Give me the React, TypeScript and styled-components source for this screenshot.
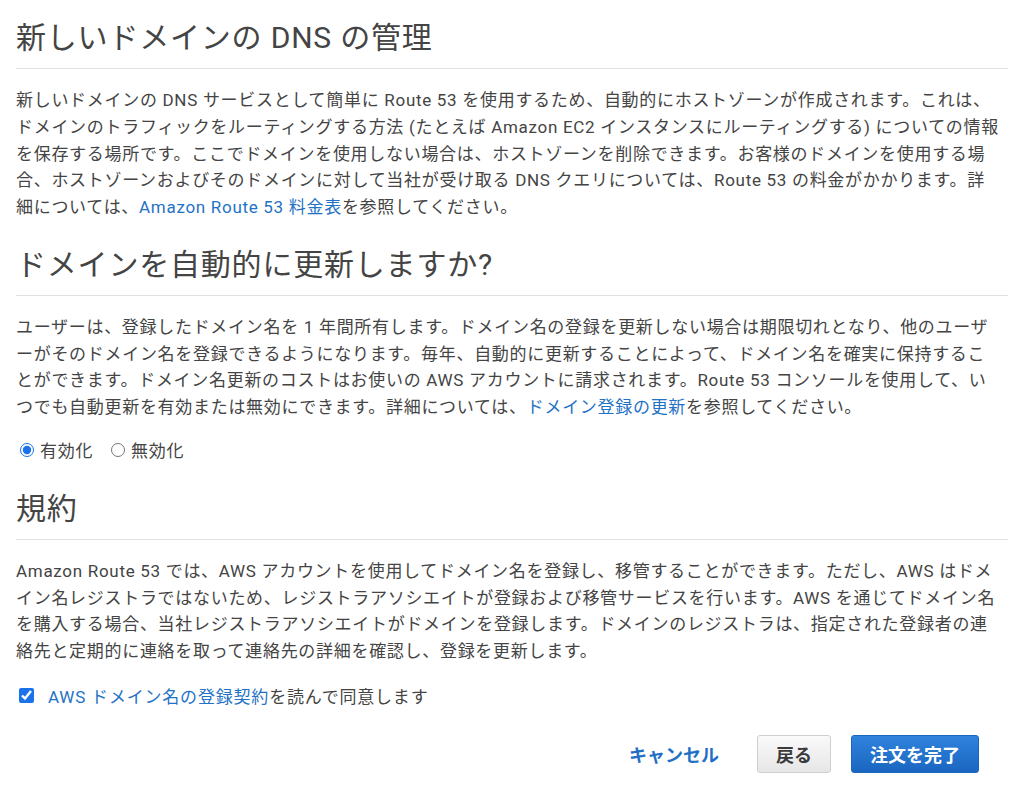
import React from "react";
import styled, { createGlobalStyle } from "styled-components";

const Global = createGlobalStyle`
  html, body { margin: 0; padding: 0; background: #fff; }
  body {
    font-family: Roboto, "Noto Sans CJK JP", "Noto Sans", sans-serif;
    color: #444;
  }
`;

const Page = styled.div`
  padding: 18px 16px 0 16px;
  display: flex;
  flex-direction: column;
`;

const Section = styled.section<{ $gap?: number }>`
  display: flex;
  flex-direction: column;
  margin-top: ${(p) => p.$gap ?? 0}px;
`;

const Heading = styled.h2`
  margin: 0;
  font-size: 30px;
  font-weight: 400;
  letter-spacing: 0.8px;
  line-height: 40px;
  color: #444;
  padding-bottom: 10px;
  border-bottom: 1px solid #e1e1e1;
`;

const Para = styled.p`
  margin: 18px 0 0 0;
  font-size: 17px;
  letter-spacing: 0.7px;
  line-height: 26.75px;
  color: #444;
`;

const Link = styled.a`
  color: #1f72c6;
  text-decoration: none;
`;

const OptionRow = styled.div`
  display: flex;
  align-items: center;
  gap: 14px;
  height: 16px;
  margin-top: 21px;
  font-size: 17px;
  letter-spacing: 0.7px;
`;

const Option = styled.label`
  display: flex;
  align-items: center;
  gap: 6px;
  cursor: pointer;
`;

const Radio = styled.input.attrs({ type: "radio" })`
  margin: 0 0 0 4px;
  width: 14px;
  height: 14px;
  accent-color: #1a73e8;
`;

const Check = styled.input.attrs({ type: "checkbox" })`
  margin: 0 0 0 3px;
  width: 15px;
  height: 15px;
  accent-color: #1a73e8;
`;

const AgreeRow = styled.label`
  display: flex;
  align-items: center;
  gap: 14px;
  font-size: 17px;
  letter-spacing: 0.8px;
  margin-top: 21px;
  height: 20px;
`;

const Actions = styled.div`
  display: flex;
  justify-content: flex-end;
  align-items: center;
  gap: 20px;
  margin-top: 29px;
  padding-right: 29px;
`;

const TextButton = styled.button`
  background: none;
  border: none;
  font-family: inherit;
  font-size: 18px;
  font-weight: 700;
  color: #1f6fc5;
  padding: 0 18px;
  height: 38px;
  cursor: pointer;
`;

const Button = styled.button<{ $primary?: boolean }>`
  font-family: inherit;
  font-size: 18px;
  font-weight: 700;
  height: 38px;
  padding: 0 18px;
  border-radius: 3px;
  cursor: pointer;
  border: 1px solid ${(p) => (p.$primary ? "#1b67bd" : "#cfcfcf")};
  color: ${(p) => (p.$primary ? "#fff" : "#3a3a3a")};
  background: ${(p) =>
    p.$primary
      ? "linear-gradient(#2f82dc, #1a66c0)"
      : "linear-gradient(#fafafa, #e6e6e6)"};
`;

export default function App() {
  return (
    <>
      <Global />
      <Page>
        <Section>
          <Heading>新しいドメインの DNS の管理</Heading>
          <Para>
            新しいドメインの DNS サービスとして簡単に Route 53 を使用するため、自動的にホストゾーンが作成されます。これは、
            <br />
            ドメインのトラフィックをルーティングする方法 (たとえば Amazon EC2 インスタンスにルーティングする) についての情報
            <br />
            を保存する場所です。ここでドメインを使用しない場合は、ホストゾーンを削除できます。お客様のドメインを使用する場
            <br />
            合、ホストゾーンおよびそのドメインに対して当社が受け取る DNS クエリについては、Route 53 の料金がかかります。詳
            <br />
            細については、<Link href="#">Amazon Route 53 料金表</Link>を参照してください。
          </Para>
        </Section>
        <Section $gap={24}>
          <Heading>ドメインを自動的に更新しますか?</Heading>
          <Para>
            ユーザーは、登録したドメイン名を 1 年間所有します。ドメイン名の登録を更新しない場合は期限切れとなり、他のユーザ
            <br />
            ーがそのドメイン名を登録できるようになります。毎年、自動的に更新することによって、ドメイン名を確実に保持するこ
            <br />
            とができます。ドメイン名更新のコストはお使いの AWS アカウントに請求されます。Route 53 コンソールを使用して、い
            <br />
            つでも自動更新を有効または無効にできます。詳細については、<Link href="#">ドメイン登録の更新</Link>を参照してください。
          </Para>
          <OptionRow>
            <Option>
              <Radio name="renew" defaultChecked />
              有効化
            </Option>
            <Option>
              <Radio name="renew" />
              無効化
            </Option>
          </OptionRow>
        </Section>
        <Section $gap={31}>
          <Heading>規約</Heading>
          <Para>
            Amazon Route 53 では、AWS アカウントを使用してドメイン名を登録し、移管することができます。ただし、AWS はドメ
            <br />
            イン名レジストラではないため、レジストラアソシエイトが登録および移管サービスを行います。AWS を通じてドメイン名
            <br />
            を購入する場合、当社レジストラアソシエイトがドメインを登録します。ドメインのレジストラは、指定された登録者の連
            <br />
            絡先と定期的に連絡を取って連絡先の詳細を確認し、登録を更新します。
          </Para>
          <AgreeRow>
            <Check defaultChecked />
            <span>
              <Link href="#">AWS ドメイン名の登録契約</Link>を読んで同意します
            </span>
          </AgreeRow>
        </Section>
        <Actions>
          <TextButton>キャンセル</TextButton>
          <Button>戻る</Button>
          <Button $primary>注文を完了</Button>
        </Actions>
      </Page>
    </>
  );
}
